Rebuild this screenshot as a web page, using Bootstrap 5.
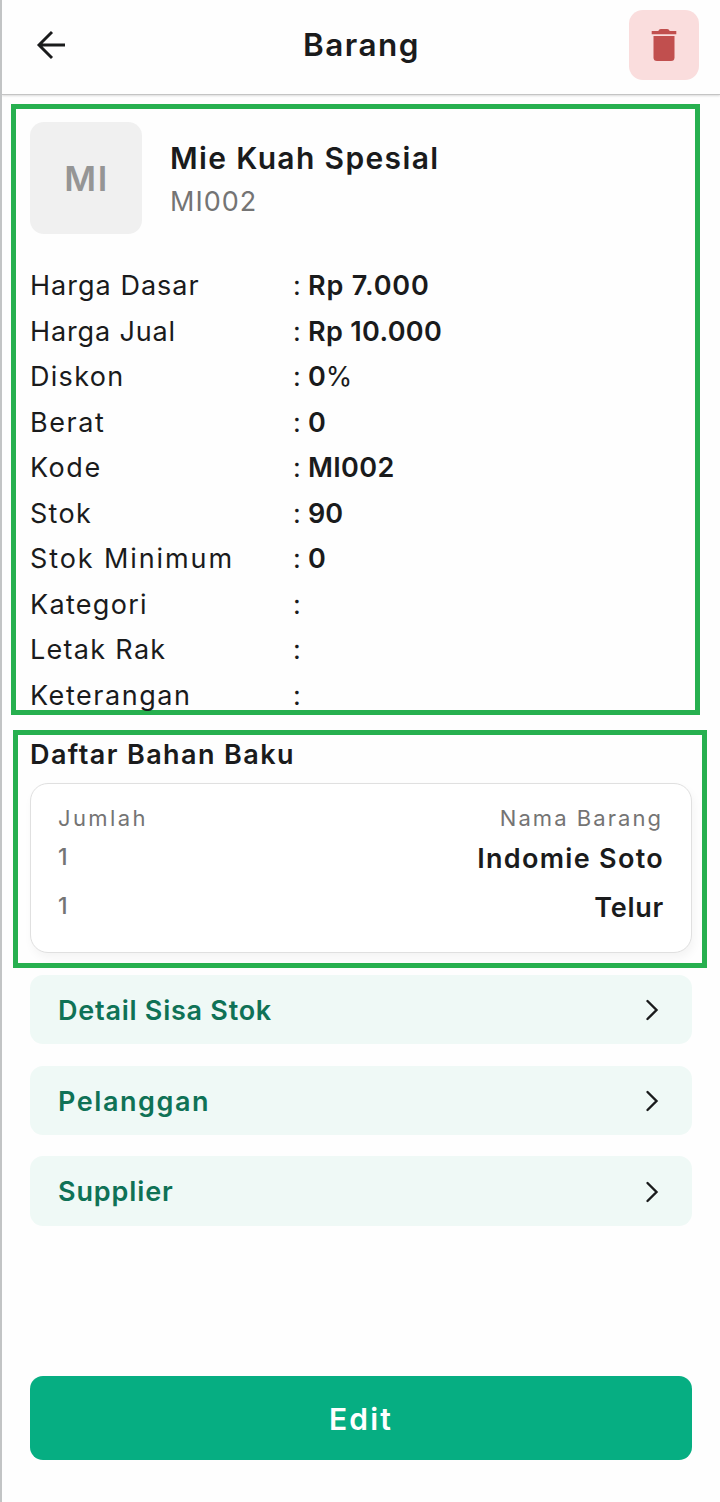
<!DOCTYPE html>
<html lang="id">
<head>
<meta charset="utf-8">
<meta name="viewport" content="width=device-width, initial-scale=1">
<title>Barang</title>
<link href="https://cdn.jsdelivr.net/npm/bootstrap@5.3.0/dist/css/bootstrap.min.css" rel="stylesheet">
<style>
  body { font-family: Inter, "Open Sans", sans-serif; font-size: 27px; color: #1a1b1c; background: #fefefe; font-feature-settings: "calt" 0; }
  .screen { height: 1502px; border-left: 2px solid #c2c4c5; overflow: hidden; }
  .fw-semi { font-weight: 600; }
  .topbar { height: 95px; padding: 10px 21px 15px 34px; border-bottom: 1px solid #c4c4c4; box-shadow: 0 1px 2px rgba(0,0,0,.14); }
  .topbar h1 { font-size: 31.5px; letter-spacing: 1.5px; margin: 0 12px 0 0; line-height: 70px; }
  .topbar .side { width: 70px; height: 70px; }
  .btn-trash { background: #fadddd; border-radius: 14px; border: 0; }
  .outlined { border: 5px solid #27b04f; }
  .info { margin: 9px 0 0 9px; width: 689px; height: 611px; padding: 13px 13px 0 14px; }
  .avatar { width: 112px; height: 112px; border-radius: 14px; background: #f0f0f0; color: #959595; font-size: 34.5px; letter-spacing: 1.5px; padding: 2px 0 0 1px; }
  .item-head { padding: 14px 0 0 28px; }
  .item-name { font-size: 30px; letter-spacing: 1.35px; line-height: 44px; }
  .item-code { letter-spacing: 1px; line-height: 43px; color: #747474; }
  .specs { margin-top: 29.2px; }
  .spec { height: 45.5px; line-height: 45.5px; white-space: pre; }
  .spec dt { width: 263px; font-weight: 400; }
  .spec dd { margin: 0; }
  .spec .sep { width: 15px; font-weight: 400; }
  .bahan { margin: 15px 0 0 11px; width: 694px; height: 238px; padding: 0 10px 0 12px; }
  .bahan h2 { font-size: 27px; letter-spacing: 1.4px; line-height: 40px; margin: 0 0 8px; }
  .bahan-card { height: 170px; border: 1px solid #e0e0e0; border-radius: 18px; background: #fff; box-shadow: 2px 5px 10px rgba(0,0,0,.045); padding: 14px 27px 0 27px; }
  .bahan-head { font-size: 22px; line-height: 40px; color: #747474; padding-right: 1px; }
  .bahan-row { height: 49px; line-height: 41px; }
  .bahan-row .qty { font-size: 23px; font-weight: 500; color: #747474; line-height: 39px; }
  .menu { margin: 7px 28px 0; gap: 21.4px; }
  .menu-link { height: 69.3px; border-radius: 13px; background: #eff9f6; color: #0f7256; padding: 0 33px 0 28px; text-decoration: none; }
  .menu-link span { padding-top: 3px; }
  .menu-link svg { margin-top: 1px; }
  .btn-edit { margin: 150px 28px 0; height: 84px; border-radius: 13px; background: #06ae82; color: #fff; font-size: 30px; letter-spacing: 2.2px; border: 0; padding: 4px 0 0; }
  .t-35 { letter-spacing: .35px; } .t-50 { letter-spacing: .4px; } .t-75 { letter-spacing: .75px; } .t-87 { letter-spacing: .87px; }
  .t-105 { letter-spacing: 1.02px; } .t-131 { letter-spacing: 1.3px; } .t-155 { letter-spacing: 1.55px; }
  .t-190 { letter-spacing: 1.9px; } .t-205 { letter-spacing: 2.05px; } .t-230 { letter-spacing: 2.4px; }
</style>
</head>
<body>
<div class="screen d-flex flex-column">
  <header class="topbar d-flex align-items-start justify-content-between flex-shrink-0">
    <a href="#" class="side d-flex align-items-center" aria-label="Kembali">
      <svg width="32" height="32" viewBox="0 0 32 32" fill="none" stroke="#1a1b1c" stroke-width="2.9"><path d="M29 16H3M16 3 3 16l13 13"/></svg>
    </a>
    <h1 class="fw-semi">Barang</h1>
    <button class="side btn-trash d-flex align-items-center justify-content-center p-0" aria-label="Hapus">
      <svg width="26" height="34" viewBox="0 0 26 34" fill="#c14f4e"><path d="M.7 3h6.6q.6-2 2.6-2h6.2q2 0 2.6 2h6.6v3.2H.7z"/><path d="M2.5 8h21v21.5a3.5 3.5 0 0 1-3.5 3.5H6a3.5 3.5 0 0 1-3.5-3.5z"/></svg>
    </button>
  </header>

  <section class="info outlined flex-shrink-0">
    <div class="d-flex">
      <div class="avatar fw-semi d-flex align-items-center justify-content-center">MI</div>
      <div class="item-head">
        <div class="item-name fw-semi">Mie Kuah Spesial</div>
        <div class="item-code">MI002</div>
      </div>
    </div>
    <dl class="specs mb-0">
      <div class="spec d-flex"><dt class="t-105">Harga Dasar</dt><dd class="sep">:</dd><dd class="fw-semi t-87">Rp 7.000</dd></div>
      <div class="spec d-flex"><dt class="t-87">Harga Jual</dt><dd class="sep">:</dd><dd class="fw-semi t-35">Rp 10.000</dd></div>
      <div class="spec d-flex"><dt class="t-131">Diskon</dt><dd class="sep">:</dd><dd><span class="fw-semi">0</span>%</dd></div>
      <div class="spec d-flex"><dt class="t-155">Berat</dt><dd class="sep">:</dd><dd class="fw-semi">0</dd></div>
      <div class="spec d-flex"><dt class="t-155">Kode</dt><dd class="sep">:</dd><dd class="fw-semi t-35">MI002</dd></div>
      <div class="spec d-flex"><dt class="t-131">Stok</dt><dd class="sep">:</dd><dd class="fw-semi">90</dd></div>
      <div class="spec d-flex"><dt class="t-190">Stok Minimum</dt><dd class="sep">:</dd><dd class="fw-semi">0</dd></div>
      <div class="spec d-flex"><dt class="t-131">Kategori</dt><dd class="sep">:</dd></div>
      <div class="spec d-flex"><dt class="t-131">Letak Rak</dt><dd class="sep">:</dd></div>
      <div class="spec d-flex"><dt class="t-155">Keterangan</dt><dd class="sep">:</dd></div>
    </dl>
  </section>

  <section class="bahan outlined flex-shrink-0">
    <h2 class="fw-semi">Daftar Bahan Baku</h2>
    <div class="bahan-card">
      <div class="bahan-head d-flex justify-content-between"><span class="t-230">Jumlah</span><span class="t-205">Nama Barang</span></div>
      <div class="bahan-row d-flex justify-content-between"><span class="qty">1</span><span class="fw-semi t-131">Indomie Soto</span></div>
      <div class="bahan-row d-flex justify-content-between"><span class="qty">1</span><span class="fw-semi t-75">Telur</span></div>
    </div>
  </section>

  <nav class="menu d-flex flex-column flex-shrink-0">
    <a href="#" class="menu-link d-flex align-items-center justify-content-between fw-semi"><span class="t-75">Detail Sisa Stok</span>
      <svg width="14" height="22" viewBox="0 0 14 22" fill="none" stroke="#1a1b1c" stroke-width="2.4" stroke-linecap="round"><path d="m2.5 2 9 9-9 9"/></svg></a>
    <a href="#" class="menu-link d-flex align-items-center justify-content-between fw-semi"><span class="t-155">Pelanggan</span>
      <svg width="14" height="22" viewBox="0 0 14 22" fill="none" stroke="#1a1b1c" stroke-width="2.4" stroke-linecap="round"><path d="m2.5 2 9 9-9 9"/></svg></a>
    <a href="#" class="menu-link d-flex align-items-center justify-content-between fw-semi"><span class="t-87">Supplier</span>
      <svg width="14" height="22" viewBox="0 0 14 22" fill="none" stroke="#1a1b1c" stroke-width="2.4" stroke-linecap="round"><path d="m2.5 2 9 9-9 9"/></svg></a>
  </nav>

  <button class="btn-edit fw-semi flex-shrink-0">Edit</button>
</div>
<script src="https://cdn.jsdelivr.net/npm/bootstrap@5.3.0/dist/js/bootstrap.bundle.min.js"></script>
</body>
</html>
